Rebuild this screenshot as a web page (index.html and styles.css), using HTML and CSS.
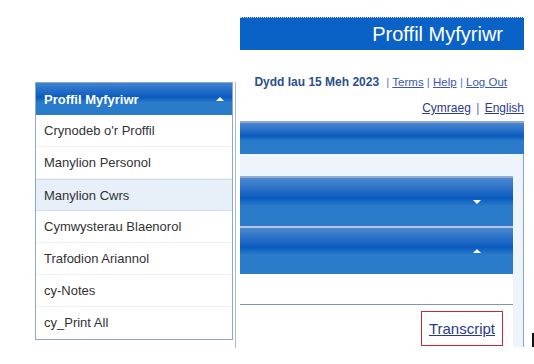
FILE: index.html
```html
<!DOCTYPE html>
<html lang="cy">
  <head>
    <meta charset="UTF-8" />
    <meta name="viewport" content="width=device-width, initial-scale=1.0" />
    <title>Proffil Myfyriwr</title>
    <link rel="stylesheet" href="styles.css">
  </head>
  <body>
    <div class="page">
      <div class="sidebar">
        <div class="menu">
          <div class="menu-header">
            <span>Proffil Myfyriwr</span>
            <span class="caret up"></span>
          </div>
          <div class="menu-item">Crynodeb o'r Proffil</div>
          <div class="menu-item">Manylion Personol</div>
          <div class="menu-item active">Manylion Cwrs</div>
          <div class="menu-item">Cymwysterau Blaenorol</div>
          <div class="menu-item">Trafodion Ariannol</div>
          <div class="menu-item">cy-Notes</div>
          <div class="menu-item last">cy_Print All</div>
        </div>
      </div>

      <div class="main">
        <div class="title-bar">Proffil Myfyriwr</div>
        <div class="date-line">
          <span class="date">Dydd Iau 15 Meh 2023</span>
          <span class="links">| <a href="#">Terms</a> | <a href="#">Help</a> | <a href="#">Log Out</a></span>
        </div>
        <div class="lang-line">
          <a href="#">Cymraeg</a> <span class="sep">|</span> <a href="#">English</a>
        </div>
        <div class="bar top-bar"></div>
        <div class="panel">
          <div class="bar section"><span class="caret down"></span></div>
          <div class="bar section second"><span class="caret up"></span></div>
          <div class="blank-row"></div>
          <div class="actions">
            <a href="#" class="transcript">Transcript</a>
          </div>
        </div>
      </div>
      <div class="cursor"></div>
    </div>
  </body>
</html>
```

FILE: styles.css
```css
body {
  margin: 0;
  padding: 0;
  background-color: #fff;
  font-family: "Liberation Sans", Arial, sans-serif;
}

.page {
  display: flex;
  align-items: flex-start;
  width: 534px;
  height: 364px;
  overflow: hidden;
}

/* left menu */
.sidebar {
  margin-left: 35px;
  margin-top: 82px;
  width: 200px;
  height: 266px;
  border-right: 1px solid #a9b9d0;
}

.menu {
  width: 196px;
  border: 1px solid #8ea6c8;
  background-color: #fff;
}

.menu-header {
  display: flex;
  justify-content: space-between;
  align-items: center;
  height: 32px;
  padding: 0 8px 0 8px;
  background: linear-gradient(#3f82cf 0%, #0a5bbf 45%, #2a7bc9 60%, #2a7bc9 100%);
  color: #fff;
  font-weight: bold;
  font-size: 13px;
}

.menu-item {
  height: 31px;
  line-height: 31px;
  padding-left: 8px;
  font-size: 13px;
  color: #333;
  border-bottom: 1px solid #eef1f5;
}

.menu-item.active {
  background-color: #e7eff9;
  border-top: 1px solid #d3dfee;
  border-bottom: 1px solid #d3dfee;
  height: 30px;
}

.menu-item.last {
  border-bottom: none;
  height: 32px;
}

.caret {
  width: 0;
  height: 0;
  border-left: 4px solid transparent;
  border-right: 4px solid transparent;
}

.caret.up {
  border-bottom: 4px solid #fff;
}

.caret.down {
  border-top: 4px solid #fff;
}

/* main column */
.main {
  margin-left: 4px;
  width: 284px;
}

.title-bar {
  margin-top: 17px;
  height: 33px;
  line-height: 33px;
  border-top: 1px dotted #c9d3e0;
  background-color: #0b62c6;
  color: #fff;
  font-size: 20px;
  text-align: right;
  padding-right: 21px;
  box-sizing: border-box;
}

.date-line {
  margin-top: 25px;
  padding-right: 17px;
  text-align: right;
  font-size: 11.5px;
  color: #5a7bb0;
  height: 15px;
  white-space: nowrap;
}

.date {
  font-size: 12px;
  font-weight: bold;
  color: #2b4f8c;
  margin-right: 4px;
}

.links a {
  color: #3c58a8;
}

.lang-line {
  margin-top: 11px;
  text-align: right;
  font-size: 12px;
  height: 15px;
}

.lang-line a {
  color: #2e3a8c;
}

.lang-line .sep {
  color: #5d6f96;
  margin: 0 2px;
}

.bar {
  background: linear-gradient(#4c88d0 0%, #0a5bbf 42%, #2a7bc9 58%, #2a7bc9 100%);
  border-top: 2px solid #92aacc;
}

.top-bar {
  margin-top: 5px;
  height: 31px;
}

.panel {
  height: 193px;
  background-color: #eef4fc;
  border-right: 1px solid #8aa4c8;
  padding: 22px 10px 0 0;
  box-sizing: border-box;
}

.section {
  display: flex;
  justify-content: flex-end;
  align-items: center;
  height: 48px;
  padding-right: 32px;
}

.section.second {
  border-top: 2px solid #b7c6da;
  height: 46px;
}

.blank-row {
  height: 30px;
  background-color: #fff;
  border-bottom: 1px solid #7c95b8;
}

.actions {
  display: flex;
  justify-content: flex-end;
  background-color: #fff;
  height: 42px;
  padding: 6px 10px 0 0;
  box-sizing: border-box;
}

.transcript {
  display: block;
  height: 33px;
  line-height: 33px;
  padding: 0 7px;
  border: 1px solid #c42a30;
  font-size: 15px;
  color: #2e3a8c;
}

.cursor {
  margin-top: 333px;
  margin-left: 8px;
  width: 2px;
  height: 14px;
  background-color: #111;
}
```
